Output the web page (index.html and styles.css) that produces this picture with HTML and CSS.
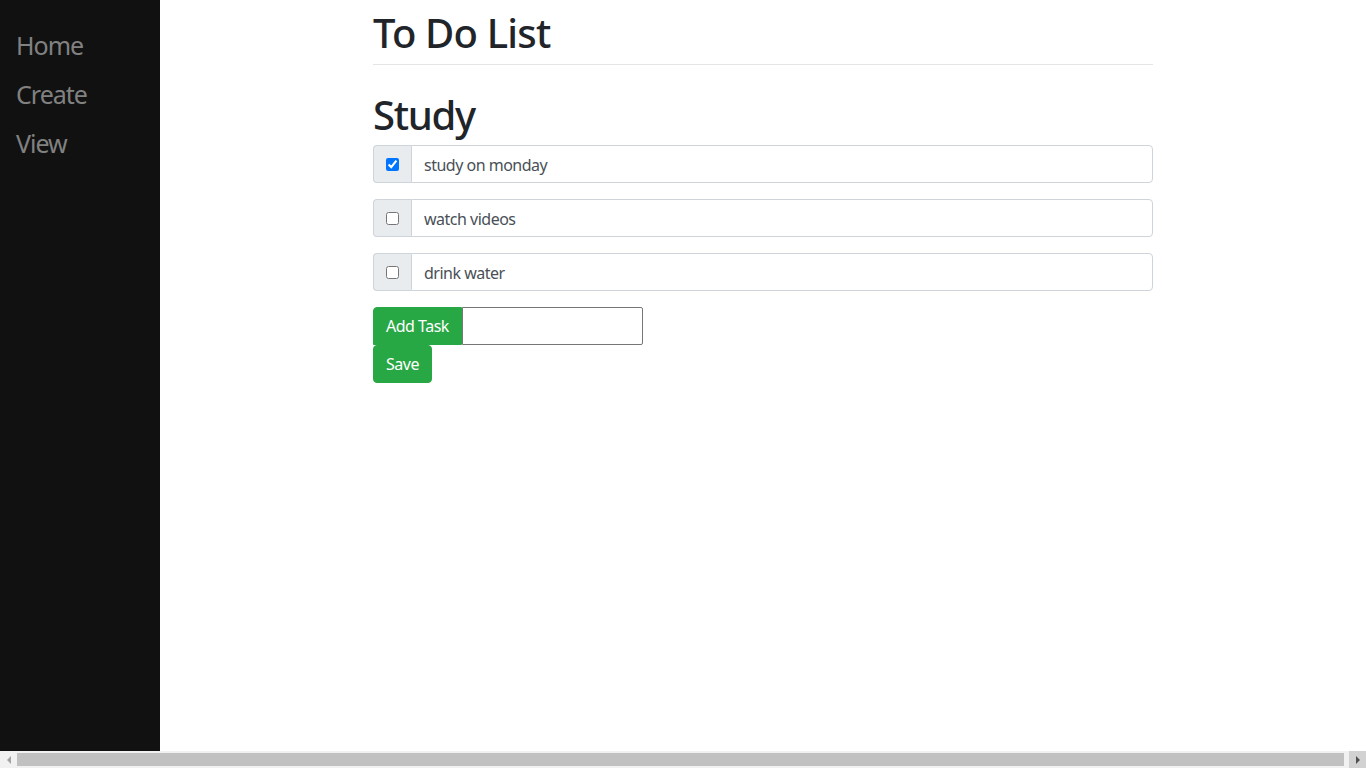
FILE: index.html
```html
<!DOCTYPE html>
<html lang="en">
<head>
<meta charset="utf-8">
<title>To Do List</title>
<link rel="stylesheet" href="styles.css">
</head>
<body>
  <div class="app">
    <nav class="sidenav">
      <a href="#">Home</a>
      <a href="#">Create</a>
      <a href="#">View</a>
    </nav>
    <main class="main">
      <div class="content">
        <h1 class="title">To Do List</h1>
        <hr class="rule">
        <h1 class="list-name">Study</h1>
        <div class="input-group">
          <div class="prepend"><input type="checkbox" checked></div>
          <input class="form-control" type="text" value="study on monday">
        </div>
        <div class="input-group">
          <div class="prepend"><input type="checkbox"></div>
          <input class="form-control" type="text" value="watch videos">
        </div>
        <div class="input-group">
          <div class="prepend"><input type="checkbox"></div>
          <input class="form-control" type="text" value="drink water">
        </div>
        <div class="add-row">
          <button class="btn btn-add" type="button">Add Task</button>
          <input class="new-task" type="text">
        </div>
        <button class="btn btn-save" type="button">Save</button>
      </div>
    </main>
  </div>
  <div class="hscroll">
    <div class="sb-btn sb-left"><span class="arrow-left"></span></div>
    <div class="sb-track"><div class="sb-thumb"></div></div>
    <div class="sb-btn sb-right"><span class="arrow-right"></span></div>
  </div>
</body>
</html>
```

FILE: styles.css
```css
html {
  height: 100%;
}
body {
  margin: 0;
  height: 100%;
  display: flex;
  flex-direction: column;
  overflow: hidden;
  font-family: "Noto Sans", "Open Sans", sans-serif;
  color: #212529;
  background: #fff;
}
.app {
  flex: 1;
  min-height: 0;
  display: flex;
}
.sidenav {
  width: 160px;
  flex: 0 0 160px;
  background: #111;
  padding-top: 21px;
  box-sizing: border-box;
  display: flex;
  flex-direction: column;
}
.sidenav a {
  display: block;
  padding: 6px 8px 6px 16px;
  font-size: 25px;
  line-height: 37px;
  letter-spacing: -1px;
  color: #818181;
  text-decoration: none;
}
.main {
  flex: 1;
}
.content {
  width: 780px;
  margin-left: 213px;
}
.title {
  margin: 0;
  padding-top: 9px;
  font-size: 40px;
  line-height: 48px;
  font-weight: 500;
  letter-spacing: -0.8px;
}
.rule {
  margin: 7px 0 0;
  border: 0;
  border-top: 1px solid #e5e5e5;
}
.list-name {
  margin: 26px 0 6px;
  font-size: 40px;
  line-height: 48px;
  font-weight: 500;
  letter-spacing: -1.3px;
}
.input-group {
  display: flex;
  height: 38px;
  margin-bottom: 16px;
}
.prepend {
  width: 38px;
  box-sizing: border-box;
  background: #e9ecef;
  border: 1px solid #ced4da;
  border-right: 0;
  border-radius: 4px 0 0 4px;
  display: flex;
  align-items: center;
  justify-content: center;
}
.prepend input {
  margin: 0;
  width: 13px;
  height: 13px;
}
.form-control {
  flex: 1;
  box-sizing: border-box;
  height: 38px;
  margin: 0;
  padding: 7px 12px 5px;
  font-family: inherit;
  font-size: 16px;
  letter-spacing: -0.5px;
  color: #495057;
  border: 1px solid #ced4da;
  border-radius: 0 4px 4px 0;
  background: #fff;
}
.add-row {
  display: flex;
  height: 38px;
}
.btn {
  box-sizing: border-box;
  height: 38px;
  padding: 6px 12px;
  font-family: inherit;
  font-size: 16px;
  line-height: 24px;
  letter-spacing: -0.5px;
  color: #fff;
  background: #28a745;
  border: 1px solid #28a745;
  cursor: pointer;
}
.btn-add {
  border-radius: 4px 0 0 0;
}
.new-task {
  box-sizing: border-box;
  width: 181px;
  height: 38px;
  margin: 0;
  border: 1px solid #767676;
  border-radius: 0 2px 2px 0;
  font-family: inherit;
  font-size: 16px;
}
.btn-save {
  display: block;
  border-radius: 4px;
}
.hscroll {
  flex: 0 0 17px;
  height: 17px;
  display: flex;
  background: #f1f1f1;
}
.sb-btn {
  width: 17px;
  flex: 0 0 17px;
  display: flex;
  align-items: center;
  justify-content: center;
}
.sb-right {
  background: #d2d2d2;
}
.arrow-left {
  width: 0;
  height: 0;
  border-top: 4px solid transparent;
  border-bottom: 4px solid transparent;
  border-right: 4px solid #a3a3a3;
}
.arrow-right {
  width: 0;
  height: 0;
  border-top: 4px solid transparent;
  border-bottom: 4px solid transparent;
  border-left: 4px solid #505050;
}
.sb-track {
  flex: 1;
  display: flex;
  padding: 2px 5px 2px 0;
}
.sb-thumb {
  flex: 1;
  background: #c1c1c1;
}
```
